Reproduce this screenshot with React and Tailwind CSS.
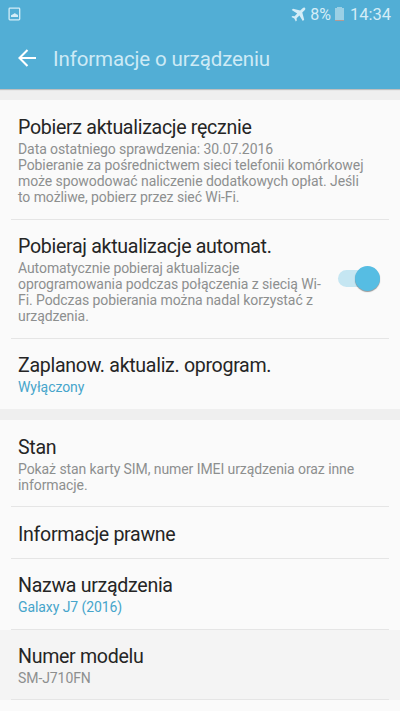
import { clsx } from 'clsx';

const updateRows = [
  {
    title: 'Pobierz aktualizacje ręcznie',
    lines: [
      'Data ostatniego sprawdzenia: 30.07.2016',
      'Pobieranie za pośrednictwem sieci telefonii komórkowej',
      'może spowodować naliczenie dodatkowych opłat. Jeśli',
      'to możliwe, pobierz przez sieć Wi-Fi.',
    ],
    rowClass: 'h-[120px] pt-[17px]',
  },
  {
    title: 'Pobieraj aktualizacje automat.',
    lines: [
      'Automatycznie pobieraj aktualizacje',
      'oprogramowania podczas połączenia z siecią Wi-',
      'Fi. Podczas pobierania można nadal korzystać z',
      'urządzenia.',
    ],
    rowClass: 'h-[119px] pt-4',
    toggle: true,
  },
  {
    title: 'Zaplanow. aktualiz. oprogram.',
    lines: ['Wyłączony'],
    rowClass: 'h-[70px] pt-4',
    accent: true,
    last: true,
  },
];

const deviceRows = [
  {
    title: 'Stan',
    lines: ['Pokaż stan karty SIM, numer IMEI urządzenia oraz inne', 'informacje.'],
    rowClass: 'h-[87px] pt-[17px]',
  },
  { title: 'Informacje prawne', lines: [], rowClass: 'h-[52px] pt-[17px]' },
  {
    title: 'Nazwa urządzenia',
    lines: ['Galaxy J7 (2016)'],
    rowClass: 'h-[71px] pt-4',
    accent: true,
  },
  {
    title: 'Numer modelu',
    lines: ['SM-J710FN'],
    rowClass: 'h-[70px] pt-4',
    pressed: true,
  },
];

function StatusBar() {
  return (
    <div className="flex h-7 items-center pl-2 pr-[9px] text-[#d4edf7]">
      <svg className="h-[14px] w-[13px]" viewBox="0 0 13 14" fill="none">
        <rect x="1.1" y="1.1" width="10.6" height="11.8" rx="0.8" stroke="currentColor" strokeWidth="1.3" />
        <path d="M3 10V8.2l1.5-.8 1-.4L7 6l1 1.2h1l1 1V10z" fill="currentColor" />
      </svg>
      <div className="ml-auto flex items-center">
        <svg className="h-[15px] w-[15px]" viewBox="0 0 15 15" fill="currentColor">
          <path d="M14 .9c-.8-.7-1.8-.2-2.4.4L9.2 3.6 2 1.7.7 3.1l5.5 3.4-2.6 2.8-2.2-.2-1 1 2.9 1.4L4.8 14.4l1-1-.2-2.2 2.8-2.6 3.4 5.5 1.4-1.3-1.9-7.2 2.3-2.4c.6-.6 1.1-1.6.4-2.3z" />
        </svg>
        <span className="ml-1 mt-0.5 text-[16px] leading-5">8%</span>
        <svg className="ml-[4px] h-[14px] w-[9px]" viewBox="0 0 9 14">
          <path d="M0 1h2V0h5v1h2v12H0z" fill="#9bd0e5" />
          <path d="M0 13h9v1H0z" fill="#b29a94" />
        </svg>
        <span className="ml-[6px] mt-0.5 text-[16.5px] leading-5">14:34</span>
      </div>
    </div>
  );
}

function Toggle() {
  return (
    <div className="relative mt-[29px] h-[27px] w-[42px] shrink-0">
      <div className="mt-[5px] h-[17px] w-9 rounded-full bg-[#c5e6f2]" />
      <div className="absolute right-0 top-[1px] h-[25px] w-[25px] rounded-full bg-[#56bde3] shadow-[0_1px_1px_rgba(0,0,0,0.4)]" />
    </div>
  );
}

function Row({ title, lines, rowClass, accent, toggle, pressed, last }) {
  return (
    <div className={clsx('flex shrink-0 flex-col', pressed && 'bg-[#f4f4f4]')}>
      <div className={clsx('flex justify-between pl-[18px] pr-5', rowClass, !last && '-mb-px')}>
        <div>
          <h2 className="whitespace-nowrap text-[19.6px] leading-[22px] tracking-[-0.31px] text-[#252525]">{title}</h2>
          <div className="mt-0.5">
            {lines.map((line) => (
              <p
                key={line}
                className={clsx(
                  'whitespace-nowrap text-[14px] leading-4 tracking-[-0.08px]',
                  accent ? 'text-[#46a5cb]' : 'text-[#8d8f8f]'
                )}
              >
                {line}
              </p>
            ))}
          </div>
        </div>
        {toggle && <Toggle />}
      </div>
      {!last && <div className="mx-[11px] h-px bg-[#e5e5e5]" />}
    </div>
  );
}

export default function App() {
  return (
    <div className="flex h-[711px] w-[400px] flex-col overflow-hidden bg-[#efefef] font-['Roboto',sans-serif]">
      <header className="h-[89px] shrink-0 bg-[#52aed5] shadow-[0_1px_1px_rgba(0,0,0,0.2)]">
        <StatusBar />
        <div className="flex h-[61px] items-center pl-[18px]">
          <svg className="-mt-0.5 h-[18px] w-[18px]" viewBox="0 0 18 18" fill="none" stroke="#fff" strokeWidth="2.1">
            <path d="M18 9H1.5M9.5 1 1.5 9l8 8" />
          </svg>
          <h1 className="ml-[17px] mt-px whitespace-nowrap text-[20.5px] leading-[30px] tracking-[-0.12px] text-[#cdeaf5]">
            Informacje o urządzeniu
          </h1>
        </div>
      </header>

      <section className="mt-[11px] flex shrink-0 flex-col bg-[#fafafa]">
        {updateRows.map((row) => (
          <Row key={row.title} {...row} />
        ))}
      </section>

      <section className="mt-[11px] flex grow flex-col bg-[#fafafa]">
        {deviceRows.map((row) => (
          <Row key={row.title} {...row} />
        ))}
      </section>
    </div>
  );
}
